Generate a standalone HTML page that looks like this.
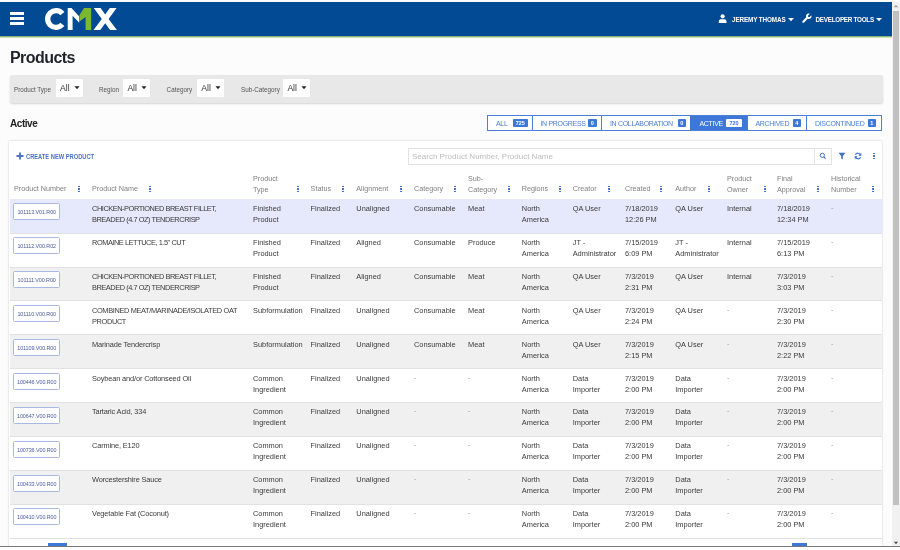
<!DOCTYPE html>
<html><head><meta charset="utf-8"><style>
*{margin:0;padding:0;box-sizing:border-box}
html,body{width:900px;height:550px;overflow:hidden;background:#fff;font-family:"Liberation Sans",sans-serif}
#w{position:absolute;left:0;top:0;width:900px;height:550px;will-change:transform}
.a{position:absolute;white-space:nowrap}
.t{position:absolute;white-space:nowrap;font-size:7.4px;line-height:11px;color:#3a3a3a}
.h{position:absolute;white-space:nowrap;font-size:7.2px;line-height:11px;color:#808080}
.k{position:absolute;width:2px}
.k i{display:block;width:1.5px;height:1.5px;background:#4a72c8;margin-bottom:1.1px}
</style></head><body><div id="w">

<div class="a" style="left:0;top:0;width:900px;height:550px;background:#fcfcfc"></div>
<div class="a" style="left:0;top:2px;width:892px;height:34px;background:#024a93"></div>
<div class="a" style="left:0;top:35.5px;width:892px;height:2.5px;background:linear-gradient(#5f8a55,#a8d088 45%,#e6f2dc)"></div>
<div class="a" style="left:10px;top:12.1px;width:14px;height:2.8px;background:#fff"></div>
<div class="a" style="left:10px;top:17.1px;width:14px;height:2.8px;background:#fff"></div>
<div class="a" style="left:10px;top:22.1px;width:14px;height:2.8px;background:#fff"></div>
<svg class="a" style="left:0;top:0" width="120" height="36" viewBox="0 0 120 36">
<path d="M62.4 13.6 A8.35 8.35 0 1 0 62.4 24.4" fill="none" stroke="#fff" stroke-width="5.3"/>
<path d="M67.7 8 H71.5 L79.2 16.5 V22.8 L72.6 15.8 V30 H67.7 Z" fill="#fff"/>
<path d="M84 8 H91.2 V30 H85.6 V17 L79.5 21.5 V15 Z" fill="#7cb82f"/>
<path d="M93.8 8 H100.6 L105.2 14.6 L109.8 8 H116.6 L108.6 19 L116.9 30 H110.1 L105.2 23.2 L100.3 30 H93.5 L101.8 19 Z" fill="#fff"/>
</svg>
<svg class="a" style="left:718px;top:14px" width="10" height="10" viewBox="0 0 10 10"><circle cx="4.65" cy="2.3" r="2.1" fill="#fff"/><path d="M0.8 9.1 V7.6 C0.8 5.8 2 5.2 3.2 5.2 H6.1 C7.3 5.2 8.5 5.8 8.5 7.6 V9.1 Z" fill="#fff"/></svg>
<div class="a" style="left:732px;top:14.5px;font-size:6.3px;line-height:10px;font-weight:bold;color:#fff;letter-spacing:-0.1px">JEREMY THOMAS</div>
<svg class="a" style="left:787.5px;top:18px" width="6" height="4" viewBox="0 0 6 4"><path d="M0 0 H6 L3 3.2 Z" fill="#fff"/></svg>
<svg class="a" style="left:802px;top:12.8px" width="10" height="10" viewBox="0 0 10 10"><path d="M9.3 2.2 L7.6 3.9 L6.1 3.9 L6.1 2.4 L7.8 0.7 C6.4 0.1 4.7 0.7 4.2 2.2 C3.9 3 4 3.7 4.2 4.3 L0.6 7.9 C0.1 8.4 0.1 9 0.6 9.4 C1 9.9 1.6 9.9 2.1 9.4 L5.7 5.8 C6.3 6 7 6.1 7.8 5.8 C9.3 5.3 9.9 3.6 9.3 2.2 Z" fill="#fff"/></svg>
<div class="a" style="left:815.5px;top:14.5px;font-size:6.3px;line-height:10px;font-weight:bold;color:#fff;letter-spacing:-0.25px">DEVELOPER TOOLS</div>
<svg class="a" style="left:875.5px;top:18px" width="6" height="4" viewBox="0 0 6 4"><path d="M0 0 H6 L3 3.2 Z" fill="#fff"/></svg>
<div class="a" style="left:892px;top:2px;width:8px;height:544px;background:#f1f1f1"></div>
<div class="a" style="left:893px;top:11px;width:6px;height:494px;background:#c1c1c1"></div>
<svg class="a" style="left:893px;top:4px" width="6" height="4" viewBox="0 0 6 4"><path d="M0.8 3.2 H5.2 L3 0.8 Z" fill="#a3a3a3"/></svg>
<svg class="a" style="left:893px;top:541px" width="6" height="4" viewBox="0 0 6 4"><path d="M0.8 0.8 H5.2 L3 3.2 Z" fill="#505050"/></svg>
<div class="a" style="left:10px;top:48px;font-size:16px;line-height:20px;font-weight:bold;color:#1f2329;letter-spacing:-0.55px">Products</div>
<div class="a" style="left:9.5px;top:74.5px;width:873.5px;height:28.5px;background:#e8e8e8;border-radius:3px;box-shadow:0 1px 2px rgba(0,0,0,0.16)"></div>
<div class="a" style="left:14px;top:84.5px;font-size:6.3px;line-height:10px;color:#555">Product Type</div>
<div class="a" style="left:55.6px;top:79px;width:27.6px;height:18px;background:#fff;border-radius:1px"></div>
<div class="a" style="left:60.0px;top:83px;font-size:8.6px;line-height:10px;color:#333">All</div>
<svg class="a" style="left:74.0px;top:86px" width="6" height="4" viewBox="0 0 6 4"><path d="M0.5 0.3 H5.5 L3 3.2 Z" fill="#222"/></svg>
<div class="a" style="left:99px;top:84.5px;font-size:6.3px;line-height:10px;color:#555">Region</div>
<div class="a" style="left:123px;top:79px;width:27.30000000000001px;height:18px;background:#fff;border-radius:1px"></div>
<div class="a" style="left:127.4px;top:83px;font-size:8.6px;line-height:10px;color:#333">All</div>
<svg class="a" style="left:141.4px;top:86px" width="6" height="4" viewBox="0 0 6 4"><path d="M0.5 0.3 H5.5 L3 3.2 Z" fill="#222"/></svg>
<div class="a" style="left:166.6px;top:84.5px;font-size:6.3px;line-height:10px;color:#555">Category</div>
<div class="a" style="left:196.9px;top:79px;width:27.400000000000006px;height:18px;background:#fff;border-radius:1px"></div>
<div class="a" style="left:201.3px;top:83px;font-size:8.6px;line-height:10px;color:#333">All</div>
<svg class="a" style="left:215.3px;top:86px" width="6" height="4" viewBox="0 0 6 4"><path d="M0.5 0.3 H5.5 L3 3.2 Z" fill="#222"/></svg>
<div class="a" style="left:241px;top:84.5px;font-size:6.3px;line-height:10px;color:#555">Sub-Category</div>
<div class="a" style="left:283px;top:79px;width:27px;height:18px;background:#fff;border-radius:1px"></div>
<div class="a" style="left:287.4px;top:83px;font-size:8.6px;line-height:10px;color:#333">All</div>
<svg class="a" style="left:301.4px;top:86px" width="6" height="4" viewBox="0 0 6 4"><path d="M0.5 0.3 H5.5 L3 3.2 Z" fill="#222"/></svg>
<div class="a" style="left:10px;top:118px;font-size:10px;line-height:12px;font-weight:bold;color:#222;letter-spacing:-0.45px">Active</div>
<div class="a" style="left:487px;top:115px;width:395px;height:16px;border:1px solid #4a7fd6;background:#fff"></div>
<div class="a" style="left:532px;top:115px;width:1px;height:16px;background:#4a7fd6"></div>
<div class="a" style="left:601px;top:115px;width:1px;height:16px;background:#4a7fd6"></div>
<div class="a" style="left:690px;top:115px;width:57px;height:16px;background:#3d78d8"></div>
<div class="a" style="left:747px;top:115px;width:1px;height:16px;background:#4a7fd6"></div>
<div class="a" style="left:806px;top:115px;width:1px;height:16px;background:#4a7fd6"></div>
<div class="a" style="left:487px;top:115px;width:395px;height:16px;border:1px solid #4a7fd6"></div>
<div class="a" style="left:496px;top:118.5px;font-size:7px;line-height:10px;color:#4a7fd6;letter-spacing:-0.32px">ALL</div>
<div class="a" style="left:540.5px;top:118.5px;font-size:7px;line-height:10px;color:#4a7fd6;letter-spacing:-0.32px">IN PROGRESS</div>
<div class="a" style="left:610px;top:118.5px;font-size:7px;line-height:10px;color:#4a7fd6;letter-spacing:-0.32px">IN COLLABORATION</div>
<div class="a" style="left:699.5px;top:118.5px;font-size:7px;line-height:10px;color:#fff;letter-spacing:-0.32px">ACTIVE</div>
<div class="a" style="left:755.5px;top:118.5px;font-size:7px;line-height:10px;color:#4a7fd6;letter-spacing:-0.32px">ARCHIVED</div>
<div class="a" style="left:815px;top:118.5px;font-size:7px;line-height:10px;color:#4a7fd6;letter-spacing:-0.32px">DISCONTINUED</div>
<style>.bd{position:absolute;height:8px;top:119px;font-size:5.5px;line-height:8px;font-weight:bold;text-align:center;border-radius:1px}</style>
<div class="bd" style="left:512.5px;width:15.5px;background:#3d78d8;color:#fff">725</div>
<div class="bd" style="left:588px;width:8.5px;background:#3d78d8;color:#fff">0</div>
<div class="bd" style="left:677.5px;width:8.5px;background:#3d78d8;color:#fff">0</div>
<div class="bd" style="left:726px;width:16px;background:#fff;color:#3d78d8">720</div>
<div class="bd" style="left:792.5px;width:8.5px;background:#3d78d8;color:#fff">4</div>
<div class="bd" style="left:867.5px;width:8.5px;background:#3d78d8;color:#fff">1</div>
<div class="a" style="left:9px;top:141px;width:873px;height:420px;background:#fff;box-shadow:0 0 2px rgba(0,0,0,0.2)"></div>
<svg class="a" style="left:15.5px;top:152px" width="8" height="8" viewBox="0 0 8 8"><path d="M3.1 0.5 H4.9 V3.1 H7.5 V4.9 H4.9 V7.5 H3.1 V4.9 H0.5 V3.1 H3.1 Z" fill="#4a72c8"/></svg>
<div class="a" style="left:26px;top:152px;font-size:6.6px;line-height:10px;font-weight:bold;color:#4a72c8;transform:scaleX(0.87);transform-origin:0 0">CREATE NEW PRODUCT</div>
<div class="a" style="left:408px;top:148px;width:424px;height:17px;border:1px solid #e3e3e3;background:#fff"></div>
<div class="a" style="left:814px;top:148px;width:18px;height:17px;border:1px solid #e3e3e3;background:#fff"></div>
<div class="a" style="left:412px;top:151.5px;font-size:8px;line-height:10px;color:#bdbdbd">Search Product Number, Product Name</div>
<svg class="a" style="left:819px;top:152px" width="8" height="8" viewBox="0 0 8 8"><circle cx="3.3" cy="3.3" r="2.1" fill="none" stroke="#4470c8" stroke-width="1"/><path d="M4.8 4.8 L6.6 6.6" stroke="#4470c8" stroke-width="1.2"/></svg>
<svg class="a" style="left:837.8px;top:152px" width="8" height="8" viewBox="0 0 8 8"><path d="M0.5 0.8 H7.5 L4.8 4 V7.4 L3.2 6.6 V4 Z" fill="#3d6fcc"/></svg>
<svg class="a" style="left:854px;top:152px" width="8" height="8" viewBox="0 0 8 8"><path d="M6.5 3.2 A2.8 2.8 0 0 0 1.4 2.6" fill="none" stroke="#3d6fcc" stroke-width="1.2"/><path d="M1.5 4.8 A2.8 2.8 0 0 0 6.6 5.4" fill="none" stroke="#3d6fcc" stroke-width="1.2"/><path d="M7.3 0.8 V3.8 H4.3 Z" fill="#3d6fcc"/><path d="M0.7 7.2 V4.2 H3.7 Z" fill="#3d6fcc"/></svg>
<div class="k" style="left:873px;top:152.5px"><i></i><i></i><i></i></div>
<div class="h" style="left:14px;top:183.3px">Product Number</div>
<div class="k" style="left:78px;top:185.5px"><i></i><i></i><i></i></div>
<div class="h" style="left:92px;top:183.3px">Product Name</div>
<div class="k" style="left:149px;top:185.5px"><i></i><i></i><i></i></div>
<div class="h" style="left:253px;top:172.8px">Product<br>Type</div>
<div class="k" style="left:297px;top:185.5px"><i></i><i></i><i></i></div>
<div class="h" style="left:310.6px;top:183.3px">Status</div>
<div class="k" style="left:342px;top:185.5px"><i></i><i></i><i></i></div>
<div class="h" style="left:356.3px;top:183.3px">Alignment</div>
<div class="k" style="left:400px;top:185.5px"><i></i><i></i><i></i></div>
<div class="h" style="left:414px;top:183.3px">Category</div>
<div class="k" style="left:454px;top:185.5px"><i></i><i></i><i></i></div>
<div class="h" style="left:468px;top:172.8px">Sub-<br>Category</div>
<div class="k" style="left:508px;top:185.5px"><i></i><i></i><i></i></div>
<div class="h" style="left:521.8px;top:183.3px">Regions</div>
<div class="k" style="left:559px;top:185.5px"><i></i><i></i><i></i></div>
<div class="h" style="left:572.7px;top:183.3px">Creator</div>
<div class="k" style="left:608px;top:185.5px"><i></i><i></i><i></i></div>
<div class="h" style="left:625px;top:183.3px">Created</div>
<div class="k" style="left:660px;top:185.5px"><i></i><i></i><i></i></div>
<div class="h" style="left:675.3px;top:183.3px">Author</div>
<div class="k" style="left:708px;top:185.5px"><i></i><i></i><i></i></div>
<div class="h" style="left:727px;top:172.8px">Product<br>Owner</div>
<div class="k" style="left:764px;top:185.5px"><i></i><i></i><i></i></div>
<div class="h" style="left:777px;top:172.8px">Final<br>Approval</div>
<div class="k" style="left:817px;top:185.5px"><i></i><i></i><i></i></div>
<div class="h" style="left:831px;top:172.8px">Historical<br>Number</div>
<div class="k" style="left:872px;top:185.5px"><i></i><i></i><i></i></div>
<div class="a" style="left:10px;top:199.00px;width:872px;height:34.10px;background:#e5e9fb"></div>
<div class="a" style="left:13.3px;top:203.30px;width:46.8px;height:17px;border:1px solid #aab9e2;border-radius:1.5px;background:#fff;font-size:5.4px;line-height:16px;color:#4a5aa0;text-align:center;letter-spacing:-0.08px">101113.V01.R00</div>
<div class="t" style="left:92px;top:203.00px;letter-spacing:-0.45px">CHICKEN-PORTIONED BREAST FILLET,<br>BREADED (4.7 OZ) TENDERCRISP</div>
<div class="t" style="left:253px;top:203.00px">Finished<br>Product</div>
<div class="t" style="left:310.6px;top:203.00px">Finalized</div>
<div class="t" style="left:356.3px;top:203.00px">Unaligned</div>
<div class="t" style="left:414px;top:203.00px">Consumable</div>
<div class="t" style="left:468px;top:203.00px">Meat</div>
<div class="t" style="left:521.8px;top:203.00px">North<br>America</div>
<div class="t" style="left:572.7px;top:203.00px">QA User</div>
<div class="t" style="left:625px;top:203.00px">7/18/2019<br>12:26 PM</div>
<div class="t" style="left:675.3px;top:203.00px">QA User</div>
<div class="t" style="left:727px;top:203.00px">Internal</div>
<div class="t" style="left:777px;top:203.00px">7/18/2019<br>12:34 PM</div>
<div class="t" style="left:831px;top:203.00px;color:#a0a0a0;margin-top:-1px">-</div>
<div class="a" style="left:10px;top:232.90px;width:872px;height:34.10px;background:#ffffff"></div>
<div class="a" style="left:10px;top:232.60px;width:872px;height:0.6px;background:#e2e2e2"></div>
<div class="a" style="left:13.3px;top:237.20px;width:46.8px;height:17px;border:1px solid #aab9e2;border-radius:1.5px;background:#fff;font-size:5.4px;line-height:16px;color:#4a5aa0;text-align:center;letter-spacing:-0.08px">101112.V00.R02</div>
<div class="t" style="left:92px;top:236.90px;letter-spacing:-0.45px">ROMAINE LETTUCE, 1.5" CUT</div>
<div class="t" style="left:253px;top:236.90px">Finished<br>Product</div>
<div class="t" style="left:310.6px;top:236.90px">Finalized</div>
<div class="t" style="left:356.3px;top:236.90px">Aligned</div>
<div class="t" style="left:414px;top:236.90px">Consumable</div>
<div class="t" style="left:468px;top:236.90px">Produce</div>
<div class="t" style="left:521.8px;top:236.90px">North<br>America</div>
<div class="t" style="left:572.7px;top:236.90px">JT -<br>Administrator</div>
<div class="t" style="left:625px;top:236.90px">7/15/2019<br>6:09 PM</div>
<div class="t" style="left:675.3px;top:236.90px">JT -<br>Administrator</div>
<div class="t" style="left:727px;top:236.90px">Internal</div>
<div class="t" style="left:777px;top:236.90px">7/15/2019<br>6:13 PM</div>
<div class="t" style="left:831px;top:236.90px;color:#a0a0a0;margin-top:-1px">-</div>
<div class="a" style="left:10px;top:266.80px;width:872px;height:34.10px;background:#f0f0f0"></div>
<div class="a" style="left:10px;top:266.50px;width:872px;height:0.6px;background:#e2e2e2"></div>
<div class="a" style="left:13.3px;top:271.10px;width:46.8px;height:17px;border:1px solid #aab9e2;border-radius:1.5px;background:#fff;font-size:5.4px;line-height:16px;color:#4a5aa0;text-align:center;letter-spacing:-0.08px">101111.V00.R00</div>
<div class="t" style="left:92px;top:270.80px;letter-spacing:-0.45px">CHICKEN-PORTIONED BREAST FILLET,<br>BREADED (4.7 OZ) TENDERCRISP</div>
<div class="t" style="left:253px;top:270.80px">Finished<br>Product</div>
<div class="t" style="left:310.6px;top:270.80px">Finalized</div>
<div class="t" style="left:356.3px;top:270.80px">Aligned</div>
<div class="t" style="left:414px;top:270.80px">Consumable</div>
<div class="t" style="left:468px;top:270.80px">Meat</div>
<div class="t" style="left:521.8px;top:270.80px">North<br>America</div>
<div class="t" style="left:572.7px;top:270.80px">QA User</div>
<div class="t" style="left:625px;top:270.80px">7/3/2019<br>2:31 PM</div>
<div class="t" style="left:675.3px;top:270.80px">QA User</div>
<div class="t" style="left:727px;top:270.80px">Internal</div>
<div class="t" style="left:777px;top:270.80px">7/3/2019<br>3:03 PM</div>
<div class="t" style="left:831px;top:270.80px;color:#a0a0a0;margin-top:-1px">-</div>
<div class="a" style="left:10px;top:300.70px;width:872px;height:34.10px;background:#ffffff"></div>
<div class="a" style="left:10px;top:300.40px;width:872px;height:0.6px;background:#e2e2e2"></div>
<div class="a" style="left:13.3px;top:305.00px;width:46.8px;height:17px;border:1px solid #aab9e2;border-radius:1.5px;background:#fff;font-size:5.4px;line-height:16px;color:#4a5aa0;text-align:center;letter-spacing:-0.08px">101110.V00.R00</div>
<div class="t" style="left:92px;top:304.70px;letter-spacing:-0.36px">COMBINED MEAT/MARINADE/ISOLATED OAT<br>PRODUCT</div>
<div class="t" style="left:253px;top:304.70px">Subformulation</div>
<div class="t" style="left:310.6px;top:304.70px">Finalized</div>
<div class="t" style="left:356.3px;top:304.70px">Unaligned</div>
<div class="t" style="left:414px;top:304.70px">Consumable</div>
<div class="t" style="left:468px;top:304.70px">Meat</div>
<div class="t" style="left:521.8px;top:304.70px">North<br>America</div>
<div class="t" style="left:572.7px;top:304.70px">QA User</div>
<div class="t" style="left:625px;top:304.70px">7/3/2019<br>2:24 PM</div>
<div class="t" style="left:675.3px;top:304.70px">QA User</div>
<div class="t" style="left:727px;top:304.70px;color:#a0a0a0;margin-top:-1px">-</div>
<div class="t" style="left:777px;top:304.70px">7/3/2019<br>2:30 PM</div>
<div class="t" style="left:831px;top:304.70px;color:#a0a0a0;margin-top:-1px">-</div>
<div class="a" style="left:10px;top:334.60px;width:872px;height:34.10px;background:#f0f0f0"></div>
<div class="a" style="left:10px;top:334.30px;width:872px;height:0.6px;background:#e2e2e2"></div>
<div class="a" style="left:13.3px;top:338.90px;width:46.8px;height:17px;border:1px solid #aab9e2;border-radius:1.5px;background:#fff;font-size:5.4px;line-height:16px;color:#4a5aa0;text-align:center;letter-spacing:-0.08px">101109.V00.R00</div>
<div class="t" style="left:92px;top:338.60px;letter-spacing:-0.14px">Marinade Tendercrisp</div>
<div class="t" style="left:253px;top:338.60px">Subformulation</div>
<div class="t" style="left:310.6px;top:338.60px">Finalized</div>
<div class="t" style="left:356.3px;top:338.60px">Unaligned</div>
<div class="t" style="left:414px;top:338.60px">Consumable</div>
<div class="t" style="left:468px;top:338.60px">Meat</div>
<div class="t" style="left:521.8px;top:338.60px">North<br>America</div>
<div class="t" style="left:572.7px;top:338.60px">QA User</div>
<div class="t" style="left:625px;top:338.60px">7/3/2019<br>2:15 PM</div>
<div class="t" style="left:675.3px;top:338.60px">QA User</div>
<div class="t" style="left:727px;top:338.60px;color:#a0a0a0;margin-top:-1px">-</div>
<div class="t" style="left:777px;top:338.60px">7/3/2019<br>2:22 PM</div>
<div class="t" style="left:831px;top:338.60px;color:#a0a0a0;margin-top:-1px">-</div>
<div class="a" style="left:10px;top:368.50px;width:872px;height:34.10px;background:#ffffff"></div>
<div class="a" style="left:10px;top:368.20px;width:872px;height:0.6px;background:#e2e2e2"></div>
<div class="a" style="left:13.3px;top:372.80px;width:46.8px;height:17px;border:1px solid #aab9e2;border-radius:1.5px;background:#fff;font-size:5.4px;line-height:16px;color:#4a5aa0;text-align:center;letter-spacing:-0.08px">100446.V00.R00</div>
<div class="t" style="left:92px;top:372.50px;letter-spacing:-0.14px">Soybean and/or Cottonseed Oil</div>
<div class="t" style="left:253px;top:372.50px">Common<br>Ingredient</div>
<div class="t" style="left:310.6px;top:372.50px">Finalized</div>
<div class="t" style="left:356.3px;top:372.50px">Unaligned</div>
<div class="t" style="left:414px;top:372.50px;color:#a0a0a0;margin-top:-1px">-</div>
<div class="t" style="left:468px;top:372.50px;color:#a0a0a0;margin-top:-1px">-</div>
<div class="t" style="left:521.8px;top:372.50px">North<br>America</div>
<div class="t" style="left:572.7px;top:372.50px">Data<br>Importer</div>
<div class="t" style="left:625px;top:372.50px">7/3/2019<br>2:00 PM</div>
<div class="t" style="left:675.3px;top:372.50px">Data<br>Importer</div>
<div class="t" style="left:727px;top:372.50px;color:#a0a0a0;margin-top:-1px">-</div>
<div class="t" style="left:777px;top:372.50px">7/3/2019<br>2:00 PM</div>
<div class="t" style="left:831px;top:372.50px;color:#a0a0a0;margin-top:-1px">-</div>
<div class="a" style="left:10px;top:402.40px;width:872px;height:34.10px;background:#f0f0f0"></div>
<div class="a" style="left:10px;top:402.10px;width:872px;height:0.6px;background:#e2e2e2"></div>
<div class="a" style="left:13.3px;top:406.70px;width:46.8px;height:17px;border:1px solid #aab9e2;border-radius:1.5px;background:#fff;font-size:5.4px;line-height:16px;color:#4a5aa0;text-align:center;letter-spacing:-0.08px">100647.V00.R00</div>
<div class="t" style="left:92px;top:406.40px;letter-spacing:-0.14px">Tartaric Acid, 334</div>
<div class="t" style="left:253px;top:406.40px">Common<br>Ingredient</div>
<div class="t" style="left:310.6px;top:406.40px">Finalized</div>
<div class="t" style="left:356.3px;top:406.40px">Unaligned</div>
<div class="t" style="left:414px;top:406.40px;color:#a0a0a0;margin-top:-1px">-</div>
<div class="t" style="left:468px;top:406.40px;color:#a0a0a0;margin-top:-1px">-</div>
<div class="t" style="left:521.8px;top:406.40px">North<br>America</div>
<div class="t" style="left:572.7px;top:406.40px">Data<br>Importer</div>
<div class="t" style="left:625px;top:406.40px">7/3/2019<br>2:00 PM</div>
<div class="t" style="left:675.3px;top:406.40px">Data<br>Importer</div>
<div class="t" style="left:727px;top:406.40px;color:#a0a0a0;margin-top:-1px">-</div>
<div class="t" style="left:777px;top:406.40px">7/3/2019<br>2:00 PM</div>
<div class="t" style="left:831px;top:406.40px;color:#a0a0a0;margin-top:-1px">-</div>
<div class="a" style="left:10px;top:436.30px;width:872px;height:34.10px;background:#ffffff"></div>
<div class="a" style="left:10px;top:436.00px;width:872px;height:0.6px;background:#e2e2e2"></div>
<div class="a" style="left:13.3px;top:440.60px;width:46.8px;height:17px;border:1px solid #aab9e2;border-radius:1.5px;background:#fff;font-size:5.4px;line-height:16px;color:#4a5aa0;text-align:center;letter-spacing:-0.08px">100736.V00.R00</div>
<div class="t" style="left:92px;top:440.30px;letter-spacing:-0.14px">Carmine, E120</div>
<div class="t" style="left:253px;top:440.30px">Common<br>Ingredient</div>
<div class="t" style="left:310.6px;top:440.30px">Finalized</div>
<div class="t" style="left:356.3px;top:440.30px">Unaligned</div>
<div class="t" style="left:414px;top:440.30px;color:#a0a0a0;margin-top:-1px">-</div>
<div class="t" style="left:468px;top:440.30px;color:#a0a0a0;margin-top:-1px">-</div>
<div class="t" style="left:521.8px;top:440.30px">North<br>America</div>
<div class="t" style="left:572.7px;top:440.30px">Data<br>Importer</div>
<div class="t" style="left:625px;top:440.30px">7/3/2019<br>2:00 PM</div>
<div class="t" style="left:675.3px;top:440.30px">Data<br>Importer</div>
<div class="t" style="left:727px;top:440.30px;color:#a0a0a0;margin-top:-1px">-</div>
<div class="t" style="left:777px;top:440.30px">7/3/2019<br>2:00 PM</div>
<div class="t" style="left:831px;top:440.30px;color:#a0a0a0;margin-top:-1px">-</div>
<div class="a" style="left:10px;top:470.20px;width:872px;height:34.10px;background:#f0f0f0"></div>
<div class="a" style="left:10px;top:469.90px;width:872px;height:0.6px;background:#e2e2e2"></div>
<div class="a" style="left:13.3px;top:474.50px;width:46.8px;height:17px;border:1px solid #aab9e2;border-radius:1.5px;background:#fff;font-size:5.4px;line-height:16px;color:#4a5aa0;text-align:center;letter-spacing:-0.08px">100433.V00.R00</div>
<div class="t" style="left:92px;top:474.20px;letter-spacing:-0.14px">Worcestershire Sauce</div>
<div class="t" style="left:253px;top:474.20px">Common<br>Ingredient</div>
<div class="t" style="left:310.6px;top:474.20px">Finalized</div>
<div class="t" style="left:356.3px;top:474.20px">Unaligned</div>
<div class="t" style="left:414px;top:474.20px;color:#a0a0a0;margin-top:-1px">-</div>
<div class="t" style="left:468px;top:474.20px;color:#a0a0a0;margin-top:-1px">-</div>
<div class="t" style="left:521.8px;top:474.20px">North<br>America</div>
<div class="t" style="left:572.7px;top:474.20px">Data<br>Importer</div>
<div class="t" style="left:625px;top:474.20px">7/3/2019<br>2:00 PM</div>
<div class="t" style="left:675.3px;top:474.20px">Data<br>Importer</div>
<div class="t" style="left:727px;top:474.20px;color:#a0a0a0;margin-top:-1px">-</div>
<div class="t" style="left:777px;top:474.20px">7/3/2019<br>2:00 PM</div>
<div class="t" style="left:831px;top:474.20px;color:#a0a0a0;margin-top:-1px">-</div>
<div class="a" style="left:10px;top:504.10px;width:872px;height:34.10px;background:#ffffff"></div>
<div class="a" style="left:10px;top:503.80px;width:872px;height:0.6px;background:#e2e2e2"></div>
<div class="a" style="left:13.3px;top:508.40px;width:46.8px;height:17px;border:1px solid #aab9e2;border-radius:1.5px;background:#fff;font-size:5.4px;line-height:16px;color:#4a5aa0;text-align:center;letter-spacing:-0.08px">100410.V00.R00</div>
<div class="t" style="left:92px;top:508.10px;letter-spacing:-0.14px">Vegetable Fat (Coconut)</div>
<div class="t" style="left:253px;top:508.10px">Common<br>Ingredient</div>
<div class="t" style="left:310.6px;top:508.10px">Finalized</div>
<div class="t" style="left:356.3px;top:508.10px">Unaligned</div>
<div class="t" style="left:414px;top:508.10px;color:#a0a0a0;margin-top:-1px">-</div>
<div class="t" style="left:468px;top:508.10px;color:#a0a0a0;margin-top:-1px">-</div>
<div class="t" style="left:521.8px;top:508.10px">North<br>America</div>
<div class="t" style="left:572.7px;top:508.10px">Data<br>Importer</div>
<div class="t" style="left:625px;top:508.10px">7/3/2019<br>2:00 PM</div>
<div class="t" style="left:675.3px;top:508.10px">Data<br>Importer</div>
<div class="t" style="left:727px;top:508.10px;color:#a0a0a0;margin-top:-1px">-</div>
<div class="t" style="left:777px;top:508.10px">7/3/2019<br>2:00 PM</div>
<div class="t" style="left:831px;top:508.10px;color:#a0a0a0;margin-top:-1px">-</div>
<div class="a" style="left:10px;top:537.8px;width:872px;height:0.8px;background:#e0e0e0"></div>
<div class="a" style="left:48px;top:542.8px;width:19px;height:3.5px;background:#3d78d8"></div>
<div class="a" style="left:792px;top:542.8px;width:14.5px;height:3.5px;background:#3d78d8"></div>
<div class="a" style="left:0;top:546px;width:900px;height:1px;background:#777"></div>
<div class="a" style="left:0;top:547px;width:900px;height:3px;background:#fff"></div>
</div></body></html>
